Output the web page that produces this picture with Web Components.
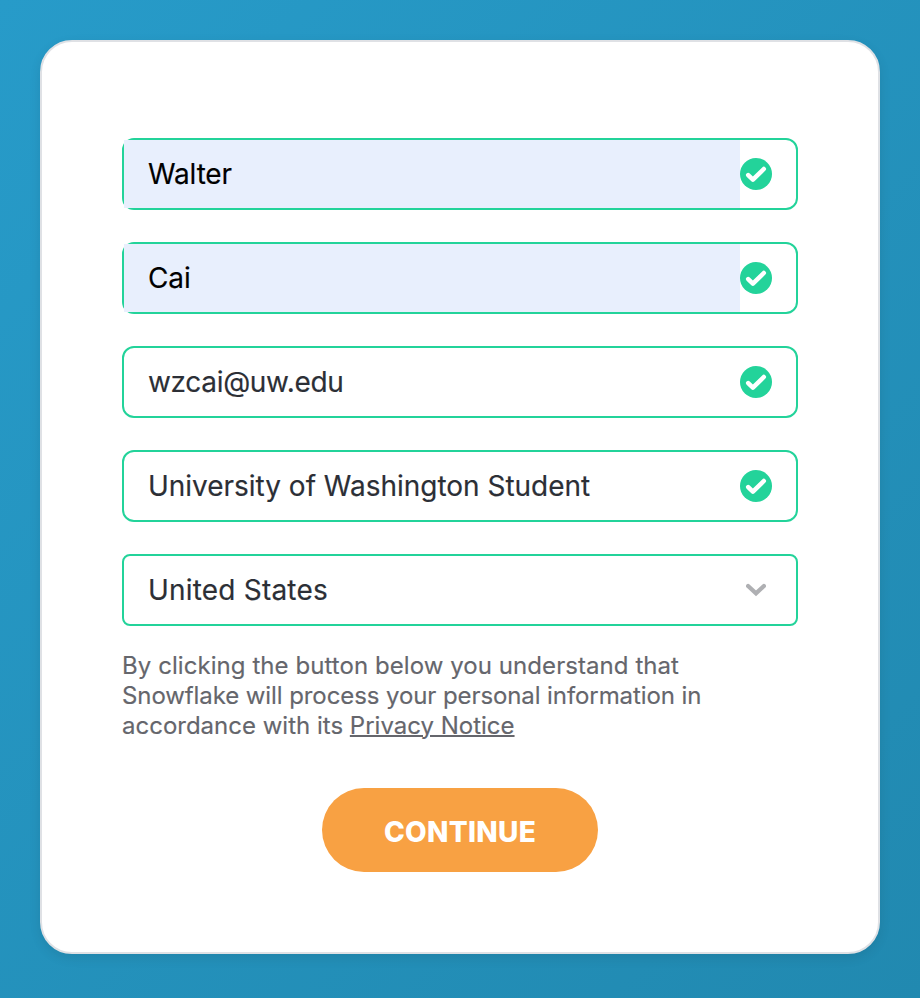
<!DOCTYPE html>
<html lang="en">
<head>
<meta charset="utf-8">
<title>Sign up</title>
<style>
html, body { margin: 0; height: 100%; }
body { font-family: Inter, "Liberation Sans", sans-serif; }
legal-note a { text-decoration: underline; text-decoration-thickness: 2px; }
</style>
</head>
<body>
<signup-page>
  <signup-card>
    <text-field autofilled style="--field-tracking:-0.15px">Walter</text-field>
    <text-field autofilled style="--field-tracking:-0.15px">Cai</text-field>
    <text-field style="--field-tracking:-0.32px">wzcai@uw.edu</text-field>
    <text-field style="--field-tracking:-0.02px">University of Washington Student</text-field>
    <select-field>United States</select-field>
    <legal-note slot="note"><span style="letter-spacing:.065px">By clicking the button below you understand that</span><span style="letter-spacing:-.09px">Snowflake will process your personal information in</span><span>accordance with its <a>Privacy Notice</a></span></legal-note>
    <pill-button slot="action">CONTINUE</pill-button>
  </signup-card>
</signup-page>
<script>
function define(name, html) {
  customElements.define(name, class extends HTMLElement {
    constructor() {
      super();
      this.attachShadow({ mode: 'open' }).innerHTML = html;
    }
  });
}

define('signup-page', `
<style>
:host { display: block; box-sizing: border-box; width: 920px; height: 998px; padding: 40px;
  background: linear-gradient(135deg, #279bc9 0%, #2189b0 100%); }
</style><slot></slot>`);

define('signup-card', `
<style>
:host { display: flex; flex-direction: column; box-sizing: border-box; height: 914px;
  padding: 96px 80px 80px; border: 2px solid #dfe1e5; border-radius: 32px; background: #fff;
  box-shadow: 0 4px 12px rgba(0,0,0,.09); }
.fields { display: flex; flex-direction: column; gap: 32px; }
.action { display: flex; justify-content: center; margin-top: 47px; }
</style>
<div class="fields"><slot></slot></div>
<slot name="note"></slot>
<div class="action"><slot name="action"></slot></div>`);

define('check-icon', `
<style>:host { display: block; width: 32px; height: 32px; } svg { display: block; }</style>
<svg width="32" height="32" viewBox="0 0 32 32"><circle cx="16" cy="16" r="16" fill="#23d39a"/><path d="M8.2 17.1L12.9 21.7L23.8 11" fill="none" stroke="#fff" stroke-width="4.5" stroke-linecap="round" stroke-linejoin="round"/></svg>`);

define('text-field', `
<style>
:host { display: flex; align-items: center; box-sizing: border-box; height: 72px;
  border: 2px solid #23d39a; border-radius: 12px; padding-right: 24px; color: #2c2f36;
  font-size: 28px; line-height: 68px; letter-spacing: var(--field-tracking, 0px); -webkit-text-stroke: 0.15px; }
.value { flex: 1; height: 68px; padding-left: 24px; white-space: nowrap; }
:host([autofilled]) .value { background: #e8effd; color: #000; }
</style>
<div class="value"><slot></slot></div><check-icon></check-icon>`);

define('select-field', `
<style>
:host { display: flex; align-items: center; justify-content: space-between; box-sizing: border-box;
  height: 72px; border: 2px solid #23d39a; border-radius: 8px; padding: 0 30px 0 24px;
  color: #2c2f36; font-size: 28px; line-height: 68px; letter-spacing: 0.2px; -webkit-text-stroke: 0.15px; }
svg { display: block; }
</style>
<span><slot></slot></span>
<svg width="20" height="14" viewBox="0 0 20 14"><path d="M2.1 3L10 10.4L17.9 3" fill="none" stroke="#afb0b3" stroke-width="4.2" stroke-linecap="round" stroke-linejoin="miter"/></svg>`);

define('legal-note', `
<style>
:host { display: flex; flex-direction: column; margin-top: 25px; color: #65666c; font-size: 24px; line-height: 30px; white-space: nowrap; -webkit-text-stroke: 0.15px; }
</style><slot></slot>`);

define('pill-button', `
<style>
:host { display: block; box-sizing: border-box; width: 276px; height: 84px; border-radius: 42px;
  background: #f8a143; color: #fff; text-align: center; font-size: 28px; font-weight: 800; line-height: 88px; letter-spacing: 0.3px; }
</style><slot></slot>`);
</script>
</body>
</html>
